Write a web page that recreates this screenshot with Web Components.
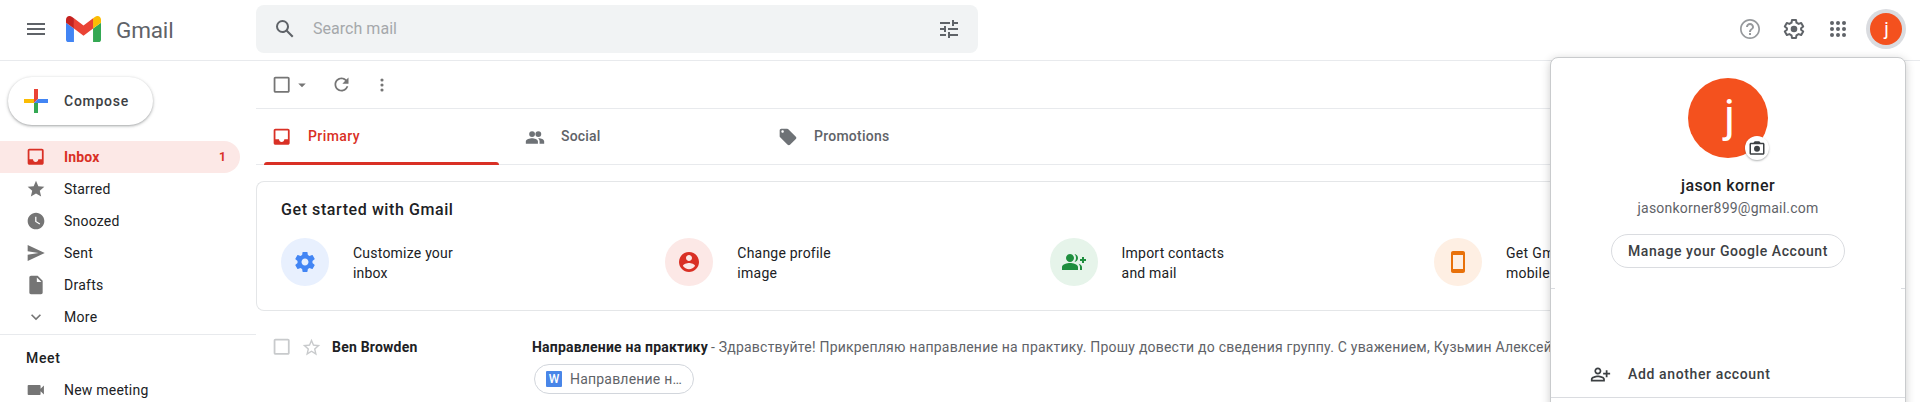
<!DOCTYPE html>
<html lang="en">
<head>
<meta charset="utf-8">
<title>Inbox (1) - Gmail</title>
<style>
html,body{margin:0;height:402px;overflow:hidden;background:#fff}
body{font-family:Roboto,"Liberation Sans",sans-serif;font-size:14px;color:#202124}
</style>
</head>
<body>
<mail-app></mail-app>
<script>
const define = (name, html, setup) => {
  const t = document.createElement('template');
  t.innerHTML = html;
  customElements.define(name, class extends HTMLElement {
    connectedCallback() {
      if (this.shadowRoot) return;
      this.attachShadow({mode: 'open'}).append(t.content.cloneNode(true));
      if (setup) setup(this, this.shadowRoot);
    }
  });
};

/* Single-line label whose tracking is adjusted to occupy a given advance width. */
define('fit-label', `<style>:host{display:inline-block;white-space:pre;line-height:20px;flex:none}span{display:inline-block}</style><span></span>`,
  (el, root) => {
    const s = root.querySelector('span');
    s.textContent = el.getAttribute('text');
    const w = parseFloat(el.getAttribute('w'));
    if (w) s.style.letterSpacing = ((w - s.getBoundingClientRect().width) / s.textContent.length).toFixed(3) + 'px';
  });

const ICONS = {
  menu: '<path d="M3 18h18v-2H3v2zm0-5h18v-2H3v2zm0-7v2h18V6H3z"/>',
  search: '<path d="M20.49 19l-5.73-5.73C15.53 12.2 16 10.91 16 9.5A6.5 6.5 0 1 0 9.5 16c1.41 0 2.7-.47 3.77-1.24L19 20.49 20.49 19zM5 9.5C5 7.01 7.01 5 9.5 5S14 7.01 14 9.5 11.99 14 9.5 14 5 11.99 5 9.5z"/>',
  tune: '<path d="M3 17v2h6v-2H3zM3 5v2h10V5H3zm10 16v-2h8v-2h-8v-2h-2v6h2zM7 9v2H3v2h4v2h2V9H7zm14 4v-2H11v2h10zm-6-4h2V7h4V5h-4V3h-2v6z"/>',
  help: '<path d="M11 18h2v-2h-2v2zm1-16C6.48 2 2 6.48 2 12s4.48 10 10 10 10-4.48 10-10S17.52 2 12 2zm0 18.3c-4.58 0-8.3-3.72-8.3-8.3S7.42 3.700 12 3.700s8.300 3.720 8.300 8.300-3.720 8.300-8.300 8.300zM12 6c-2.210 0-4 1.790-4 4h2c0-1.100.9-2 2-2s2 .9 2 2c0 2-3 1.750-3 5h2c0-2.250 3-2.500 3-5 0-2.210-1.790-4-4-4z"/>',
  gearline: '<path fill="none" stroke="currentColor" stroke-width="2" stroke-linejoin="round" d="M10 3h4l.5 2.700 2.100 1.200 2.600-.9 2 3.450-2.100 1.800v1.500l2.100 1.800-2 3.450-2.600-.9-2.100 1.200L14 21h-4l-.5-2.700-2.100-1.200-2.600.9-2-3.450 2.100-1.800v-1.500l-2.100-1.800 2-3.450 2.600.9 2.100-1.200z"/><circle cx="12" cy="12" r="3.300"/>',
  apps: '<g>' + [6,12,18].flatMap(y => [6,12,18].map(x => `<circle cx="${x}" cy="${y}" r="2"/>`)).join('') + '</g>',
  box: '<path d="M19 5v14H5V5h14m0-2H5c-1.100 0-2 .9-2 2v14c0 1.100.9 2 2 2h14c1.100 0 2-.9 2-2V5c0-1.100-.9-2-2-2z"/>',
  caret: '<path d="M7 10l5 5 5-5z"/>',
  refresh: '<path d="M17.650 6.350C16.200 4.900 14.210 4 12 4c-4.420 0-7.990 3.580-7.990 8s3.570 8 7.990 8c3.730 0 6.840-2.550 7.730-6h-2.080c-.82 2.330-3.040 4-5.650 4-3.310 0-6-2.690-6-6s2.690-6 6-6c1.660 0 3.140.69 4.220 1.780L13 11h7V4l-2.350 2.350z"/>',
  dots: '<circle cx="12" cy="6" r="1.900"/><circle cx="12" cy="12" r="1.900"/><circle cx="12" cy="18" r="1.900"/>',
  inbox: '<path d="M19 3H5c-1.100 0-2 .9-2 2v14c0 1.100.9 2 2 2h14c1.100 0 2-.9 2-2V5c0-1.100-.9-2-2-2zm0 12h-4c0 1.660-1.350 3-3 3s-3-1.340-3-3H5V5h14v10z"/>',
  star: '<path d="M12 17.270L18.180 21l-1.640-7.030L22 9.240l-7.190-.61L12 2 9.190 8.630 2 9.240l5.460 4.730L5.820 21z"/>',
  starline: '<path d="M22 9.240l-7.190-.62L12 2 9.190 8.630 2 9.240l5.460 4.730L5.820 21 12 17.270 18.180 21l-1.630-7.030L22 9.240zM12 15.400l-3.760 2.270 1-4.280-3.320-2.880 4.380-.38L12 6.100l1.710 4.040 4.380.38-3.320 2.880 1 4.280L12 15.400z"/>',
  clock: '<path d="M12 2C6.500 2 2 6.500 2 12s4.500 10 10 10 10-4.500 10-10S17.500 2 12 2zm4.200 14.200L11 13V7h1.500v5.200l4.500 2.700-.8 1.300z"/>',
  send: '<path d="M2.010 21.500L22.500 12 2.010 2.500 2 9.900l13 2.100-13 2.100z"/>',
  draft: '<path d="M14 1H6c-1.100 0-2 .9-2 2v18c0 1.100.9 2 2 2h12c1.100 0 2-.9 2-2V7l-6-6zm-1 7.500V3l5.500 5.500H13z"/>',
  more: '<path d="M7.400 8.590L12 13.170l4.600-4.580L18 10l-6 6-6-6z"/>',
  video: '<path d="M17.500 10.500V7c0-.55-.45-1-1-1H3c-.55 0-1 .45-1 1v10c0 .55.45 1 1 1h13.500c.55 0 1-.45 1-1v-3.500l4 4v-11l-4 4z"/>',
  people: '<path d="M8.500 12a3.500 3.500 0 1 0 0-7 3.500 3.500 0 0 0 0 7zm7.500 0a3.500 3.500 0 1 0 0-7 3.500 3.500 0 0 0 0 7zM8.500 13.500C5.800 13.500 1 14.800 1 17.200V20h14.500v-2.800c0-2.400-4.300-3.700-7-3.700zm8 0-1 .1c1.100.8 2 2 2 3.600V20H23v-2.800c0-2.400-3.800-3.700-6.500-3.700z"/>',
  tag: '<path d="M21.410 11.580l-9-9C12.050 2.220 11.550 2 11 2H4c-1.100 0-2 .9-2 2v7c0 .55.22 1.050.59 1.420l9 9c.36.36.86.58 1.410.58s1.050-.22 1.410-.59l7-7c.37-.36.59-.86.59-1.410s-.23-1.060-.59-1.420zM5.500 7C4.670 7 4 6.330 4 5.500S4.670 4 5.500 4 7 4.670 7 5.500 6.330 7 5.500 7z"/>',
  gear: '<path d="M19.430 12.980c.04-.32.07-.64.07-.98s-.03-.66-.07-.98l2.110-1.650c.19-.15.24-.42.12-.64l-2-3.460c-.12-.22-.39-.3-.61-.22l-2.490 1c-.52-.4-1.080-.73-1.690-.98l-.38-2.650C14.460 2.180 14.250 2 14 2h-4c-.25 0-.46.18-.49.42l-.38 2.650c-.61.25-1.170.59-1.690.98l-2.490-1c-.23-.09-.49 0-.61.22l-2 3.460c-.13.22-.07.49.12.64l2.110 1.650c-.04.32-.07.65-.07.98s.03.66.07.98l-2.110 1.650c-.19.15-.24.42-.12.64l2 3.460c.12.22.39.3.61.22l2.490-1c.52.4 1.080.73 1.690.98l.38 2.650c.03.24.24.42.49.42h4c.25 0 .46-.18.49-.42l.38-2.650c.61-.25 1.170-.59 1.690-.98l2.490 1c.23.09.49 0 .61-.22l2-3.460c.12-.22.07-.49-.12-.64l-2.110-1.650zM12 15.500c-1.930 0-3.500-1.570-3.500-3.500s1.570-3.500 3.500-3.500 3.500 1.570 3.500 3.500-1.570 3.500-3.500 3.500z"/>',
  account: '<path d="M12 2C6.480 2 2 6.480 2 12s4.480 10 10 10 10-4.480 10-10S17.520 2 12 2zm0 3c1.660 0 3 1.340 3 3s-1.340 3-3 3-3-1.340-3-3 1.340-3 3-3zm0 14.200c-2.500 0-4.710-1.280-6-3.220.03-1.990 4-3.080 6-3.080 1.990 0 5.970 1.090 6 3.080-1.290 1.940-3.500 3.220-6 3.220z"/>',
  groupadd: '<path d="M22 9V7h-2v2h-2v2h2v2h2v-2h2V9zM8 12c2.210 0 4-1.790 4-4s-1.790-4-4-4-4 1.790-4 4 1.790 4 4 4zm0 1c-2.670 0-8 1.340-8 4v3h16v-3c0-2.660-5.330-4-8-4zM12.510 4.050C13.430 5.110 14 6.490 14 8s-.57 2.890-1.490 3.950C14.470 11.700 16 10.040 16 8s-1.530-3.700-3.490-3.950zM16.530 13.830C17.420 14.660 18 15.700 18 17v3h2v-3c0-1.450-1.590-2.510-3.470-3.170z"/>',
  phone: '<path d="M17 1.010L7 1c-1.100 0-2 .9-2 2v18c0 1.100.9 2 2 2h10c1.100 0 2-.9 2-2V3c0-1.100-.9-1.990-2-1.990zM17 19H7V5h10v14z"/>',
  camera: '<path d="M20 5h-3.200L15 3H9L7.200 5H4c-1.100 0-2 .9-2 2v12c0 1.100.9 2 2 2h16c1.100 0 2-.9 2-2V7c0-1.100-.9-2-2-2zm0 14H4V7h16v12z"/><circle cx="12" cy="13" r="4"/>',
  personadd: '<path d="M9 12c2.210 0 4-1.790 4-4s-1.790-4-4-4-4 1.790-4 4 1.790 4 4 4zm0-6c1.100 0 2 .9 2 2s-.9 2-2 2-2-.9-2-2 .9-2 2-2zm0 7c-2.670 0-8 1.340-8 4v3h16v-3c0-2.660-5.330-4-8-4zm6 5H3v-1c0-.66 3-2 6-2s6 1.340 6 2v1zM20 10V7h-2v3h-3v2h3v3h2v-3h3v-2z"/>',
  plus: '<path fill="#ea4335" d="M10 0h4v10l-4 4z"/><path fill="#4285f4" d="M14 10h10v4H10z"/><path fill="#34a853" d="M10 14h4v10h-4z"/><path fill="#fbbc04" d="M0 10h10v4H0z"/>'
};
define('g-icon', `<style>:host{display:block;flex:none}svg{display:block;fill:currentColor}</style><svg viewBox="0 0 24 24"></svg>`,
  (el, root) => {
    const svg = root.querySelector('svg'), s = el.getAttribute('size') || 20;
    svg.setAttribute('width', s); svg.setAttribute('height', s);
    svg.innerHTML = ICONS[el.getAttribute('name')];
  });

define('gmail-logo', `<style>:host{display:flex;align-items:center;color:#5f6368;gap:15px}
fit-label{font-size:22.5px;line-height:26px;padding-top:1px}svg{display:block}</style>
<svg width="35" height="26" viewBox="52 42 88 66" preserveAspectRatio="none"><path fill="#4285f4" d="M58 108h14V74L52 59v43c0 3.320 2.690 6 6 6"/><path fill="#34a853" d="M120 108h14c3.320 0 6-2.690 6-6V59l-20 15"/><path fill="#fbbc04" d="M120 48v26l20-15v-8c0-7.420-8.470-11.650-14.400-7.200"/><path fill="#ea4335" d="M72 74V48l24 18 24-18v26L96 92"/><path fill="#c5221f" d="M52 51v8l20 15V48l-5.600-4.200c-5.940-4.450-14.400-.22-14.400 7.200"/></svg>
<fit-label text="Gmail" w="57.500"></fit-label>`);

define('search-box', `<style>:host{display:flex;align-items:center;box-sizing:border-box;width:722px;height:48px;border-radius:8px;background:#f1f3f4;color:#5f6368;padding:0 17px}
fit-label{font-size:16px;color:#a5a8ab;margin-left:16px;flex:1}</style>
<g-icon name="search" size="24"></g-icon><fit-label text="Search mail" w="84"></fit-label><g-icon name="tune" size="24"></g-icon>`);

define('user-avatar', `<style>:host{display:flex;align-items:center;justify-content:center;flex:none;border-radius:50%;background:#f4511e;color:#fff;width:var(--size);height:var(--size);font-size:var(--font)}span{padding:0 0 var(--up) var(--right)}</style><span><slot></slot></span>`);

define('app-header', `<style>:host{display:flex;box-sizing:border-box;height:61px;border-bottom:1px solid #e8eaed;padding:5px 14px 7px 24px;align-items:center;color:#5f6368}
gmail-logo{margin-left:18px;width:190px}
.right{margin-left:auto;display:flex;align-items:center;gap:20px}
.ring{padding:4px;border-radius:50%;background:#dadce0;margin-left:-4px;--size:32px;--font:19px;--up:2px;--right:1px}
.help{opacity:.65}</style>
<g-icon name="menu" size="24"></g-icon><gmail-logo></gmail-logo><search-box></search-box>
<div class="right"><g-icon class="help" name="help" size="24"></g-icon><g-icon name="gearline" size="24"></g-icon><g-icon name="apps" size="24"></g-icon><div class="ring"><user-avatar>j</user-avatar></div></div>`);

define('nav-item', `<style>:host{display:flex;align-items:center;height:32px;width:240px;box-sizing:border-box;padding:0 14px 0 26px;color:#202124}
.ico{color:#757575;width:20px;display:flex;justify-content:center}.n{margin-left:auto;font-size:12px}
:host([active]){background:#fce8e6;border-radius:0 16px 16px 0;color:#d93025;font-weight:700}
:host([active]) .ico{color:#d93025}fit-label{margin-left:18px}</style>
<span class="ico"></span><span class="n"></span>`,
  (el, root) => {
    const ni = document.createElement('g-icon'), nl = document.createElement('fit-label');
    ni.setAttribute('name', el.getAttribute('icon')); ni.setAttribute('size', el.getAttribute('size') || 20);
    nl.setAttribute('text', el.getAttribute('label')); nl.setAttribute('w', el.getAttribute('w'));
    root.querySelector('.ico').append(ni);
    root.querySelector('.ico').after(nl);
    root.querySelector('.n').textContent = el.getAttribute('count') || '';
  });

define('side-bar', `<style>:host{display:block;width:256px;flex:none}
.compose{display:flex;align-items:center;box-sizing:border-box;width:145px;height:48px;margin:16px 0 16px 8px;padding-left:16px;gap:16px;border-radius:24px;color:#3c4043;font-weight:500;background:#fff;box-shadow:0 1px 2px rgba(60,64,67,.302),0 1px 3px 1px rgba(60,64,67,.149)}
.meet{border-top:1px solid #e8eaed;margin-top:1px;padding:13px 0 6px 26px;font-weight:500;height:20px}</style>
<div class="compose"><g-icon name="plus" size="24"></g-icon><fit-label text="Compose" w="65"></fit-label></div>
<nav-item active icon="inbox" size="21.330" label="Inbox" w="35.500" count="1"></nav-item>
<nav-item icon="star" label="Starred" w="46.500"></nav-item>
<nav-item icon="clock" label="Snoozed" w="55.500"></nav-item>
<nav-item icon="send" label="Sent" w="29"></nav-item>
<nav-item icon="draft" label="Drafts" w="39.500"></nav-item>
<nav-item icon="more" label="More" w="33.500"></nav-item>
<div class="meet"><fit-label text="Meet" w="34.500"></fit-label></div>
<nav-item icon="video" label="New meeting" w="84.500"></nav-item>`);

define('mail-toolbar', `<style>:host{display:flex;align-items:center;box-sizing:border-box;height:48px;border-bottom:1px solid #e8eaed;padding-left:15.330px;color:#757575}
.c{margin-left:.340px}.r{margin-left:20px}.d{margin-left:20px}</style>
<g-icon name="box" size="21.330"></g-icon><g-icon class="c" name="caret" size="18"></g-icon><g-icon class="r" name="refresh" size="21"></g-icon><g-icon class="d" name="dots" size="20"></g-icon>`);

define('mail-tab', `<style>:host{display:flex;position:relative;align-items:center;box-sizing:border-box;width:253px;height:55px;padding-left:16px;gap:16px;color:#5f6368;font-weight:500}
::slotted(fit-label){margin-bottom:1px}::slotted(g-icon){opacity:.9}
:host([active]) ::slotted(g-icon){opacity:1;margin:0 -.665px}
:host([active]){color:#d93025}i{display:none;position:absolute;left:8px;width:235px;bottom:-1px;height:3px;border-radius:3px 3px 0 0;background:#d93025}
:host([active]) i{display:block}</style><slot></slot><i></i>`);

define('start-card', `<style>:host{display:block;box-sizing:border-box;height:130px;margin-top:16px;padding:18px 0 0 24px;border:1px solid #e4e6e8;border-right:0;border-radius:8px 0 0 8px}
h2{margin:0;font-weight:500;font-size:16px;line-height:20px}
.items{display:flex;margin-top:18px}.item{width:384.300px;flex:none;display:flex;gap:24px;align-items:center;line-height:20px}
.item>div+div{padding-top:1px;margin-bottom:-1px}
.disc{width:48px;height:48px;border-radius:50%;display:flex;align-items:center;justify-content:center;flex:none}
fit-label{display:block}</style>
<h2><fit-label text="Get started with Gmail" w="172.500"></fit-label></h2>
<div class="items">
<div class="item"><div class="disc" style="background:#e8f0fe;color:#4285f4"><g-icon name="gear" size="24"></g-icon></div><div><fit-label text="Customize your" w="100"></fit-label><fit-label text="inbox" w="34.500"></fit-label></div></div>
<div class="item"><div class="disc" style="background:#fce8e6;color:#d93025"><g-icon name="account" size="24"></g-icon></div><div><fit-label text="Change profile" w="93"></fit-label><fit-label text="image" w="40"></fit-label></div></div>
<div class="item"><div class="disc" style="background:#e6f4ea;color:#1e8e3e"><g-icon name="groupadd" size="24"></g-icon></div><div><fit-label text="Import contacts" w="102.500"></fit-label><fit-label text="and mail" w="55"></fit-label></div></div>
<div class="item"><div class="disc" style="background:#feefe3;color:#e8710a"><g-icon name="phone" size="24"></g-icon></div><div><fit-label text="Get Gmail for" w="87"></fit-label><fit-label text="mobile" w="44"></fit-label></div></div>
</div>`);

define('mail-row', `<style>:host{display:flex;align-items:flex-start;padding:26px 0 0 15.330px;white-space:nowrap}
.ico{display:flex;align-items:center;height:20px;gap:8px;color:#c8cacc}
.name{font-weight:700;width:200px;margin-left:10.340px}
.line{display:flex;gap:3px;color:#5f6368}.subj{font-weight:700;color:#202124}
.chip{display:flex;align-items:center;box-sizing:border-box;width:160px;height:30px;border:1px solid #d2d6dc;border-radius:15px;margin:7px 0 0 2px;padding-left:11px;gap:8px;color:#5f6368}
.w{width:16px;height:16px;border-radius:1px;background:#4986e8;color:#fff;font:500 12px/16px Roboto,sans-serif;text-align:center}</style>
<div class="ico"><g-icon name="box" size="21.330"></g-icon><g-icon name="starline" size="21"></g-icon></div>
<fit-label class="name" text="Ben Browden" w="85.500"></fit-label>
<div><div class="line"><fit-label class="subj" text="Направление на практику" w="176"></fit-label><fit-label text="- Здравствуйте! Прикрепляю направление на практику. Прошу довести до сведения группу. С уважением, Кузьмин Алексей" w="841"></fit-label></div>
<div class="chip"><span class="w">W</span><fit-label text="Направление н…" w="112"></fit-label></div></div>`);

define('account-menu', `<style>:host{display:block;position:absolute;box-sizing:border-box;left:1550px;top:57px;width:356px;height:380px;background:#fff;border:1px solid #c9cbcd;border-radius:8px;box-shadow:0 2px 10px rgba(0,0,0,.2)}
.col{display:flex;flex-direction:column;align-items:center;padding-top:20px}
.pic{position:relative;--size:80px;--font:46px;--up:4px;--right:3px}
.cam{position:absolute;left:57px;top:58px;width:24px;height:24px;border-radius:50%;background:#fff;color:#3c4043;display:flex;align-items:center;justify-content:center;box-shadow:0 1px 2px rgba(60,64,67,.4)}
.name{font-size:16px;font-weight:500;margin-top:18px}.mail{color:#5f6368;margin-top:2px}
.btn{display:flex;align-items:center;justify-content:center;box-sizing:border-box;width:234px;height:34px;border:1px solid #dadce0;border-radius:17px;margin-top:16px;font-weight:500;color:#3c4043}
.ends{display:flex;justify-content:space-between;margin-top:20px}.ends i{width:4px;height:1px;background:#dadce0}
.add{display:flex;align-items:center;height:46px;margin-top:62px;padding-left:39px;gap:17px;color:#3c4043;font-weight:500;border-bottom:1px solid #dadce0}</style>
<div class="col"><div class="pic"><user-avatar>j</user-avatar><div class="cam"><g-icon name="camera" size="18"></g-icon></div></div>
<fit-label class="name" text="jason korner" w="94"></fit-label><fit-label class="mail" text="jasonkorner899@gmail.com" w="181"></fit-label>
<div class="btn"><fit-label text="Manage your Google Account" w="200"></fit-label></div></div>
<div class="ends"><i></i><i></i></div>
<div class="add"><g-icon name="personadd" size="21"></g-icon><fit-label text="Add another account" w="142.500"></fit-label></div>`);

define('mail-app', `<style>:host{display:block;width:1920px;height:402px;overflow:hidden;position:relative}
.body{display:flex}main{width:1648px;overflow:hidden;height:341px}
.tabs{display:flex;height:56px;box-sizing:border-box;border-bottom:1px solid #e8eaed}</style>
<app-header></app-header>
<div class="body"><side-bar></side-bar><main>
<mail-toolbar></mail-toolbar>
<div class="tabs"><mail-tab active><g-icon name="inbox" size="21.330"></g-icon><fit-label text="Primary" w="52"></fit-label></mail-tab><mail-tab><g-icon name="people" size="20"></g-icon><fit-label text="Social" w="39.500"></fit-label></mail-tab><mail-tab><g-icon name="tag" size="20"></g-icon><fit-label text="Promotions" w="75.500"></fit-label></mail-tab></div>
<start-card></start-card><mail-row></mail-row>
</main></div>
<account-menu></account-menu>`);
</script>
</body>
</html>
